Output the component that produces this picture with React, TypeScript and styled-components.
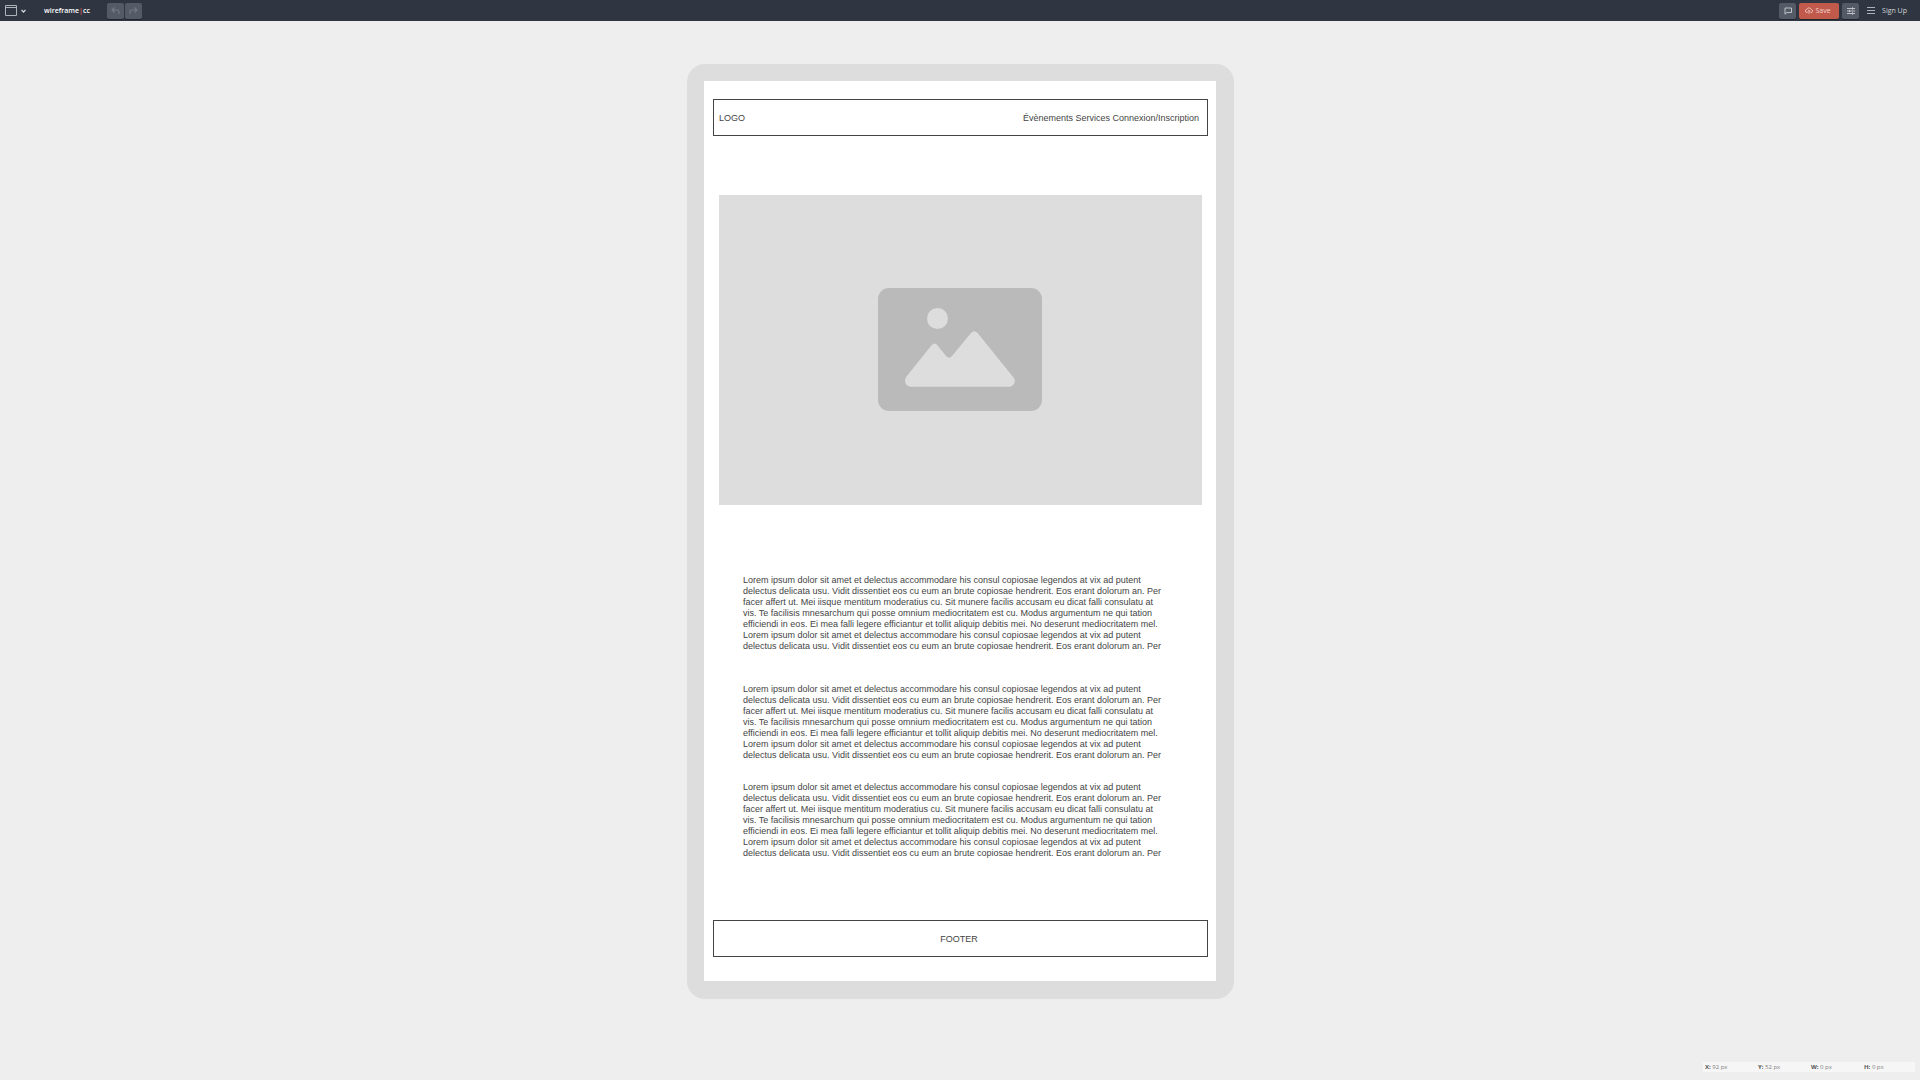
import React from "react";
import styled, { createGlobalStyle } from "styled-components";

const GlobalStyle = createGlobalStyle`
  * { box-sizing: border-box; }
  body {
    margin: 0;
    background: #eeeeee;
    color: #444444;
    font-family: "Liberation Sans", Arial, sans-serif;
    font-size: 9px;
    line-height: 11px;
  }
`;

const uiFont = `"Open Sans", "Noto Sans", sans-serif`;

const Page = styled.div`
  display: flex;
  flex-direction: column;
  min-height: 100vh;
`;

const TopBar = styled.header`
  display: flex;
  align-items: center;
  justify-content: space-between;
  height: 21px;
  padding: 0 13px 0 5px;
  background: #2f3541;
  color: #d3d5d9;
  font-family: ${uiFont};
`;

const Group = styled.div<{ $gap: number }>`
  display: flex;
  align-items: center;
  gap: ${(p) => p.$gap}px;
`;

const PlainButton = styled.button`
  display: flex;
  align-items: center;
  gap: 4px;
  padding: 0;
  border: 0;
  background: none;
  color: #aeb2b9;
`;

const Brand = styled.a`
  margin: 0 17px 0 18px;
  color: #ffffff;
  font-size: 7px;
  font-weight: 600;
  text-decoration: none;

  span { color: #e0604f; }
`;

const ToolButton = styled.button<{ $tone?: "save" | "dim" }>`
  display: flex;
  align-items: center;
  justify-content: center;
  gap: 3px;
  width: ${(p) => (p.$tone === "save" ? 40 : 17)}px;
  height: 16px;
  padding: ${(p) => (p.$tone === "save" ? "0 3px 0 0" : "0")};
  border: 0;
  border-radius: 2px;
  background: ${(p) => (p.$tone === "save" ? "#c25a4b" : "#555b66")};
  box-shadow: 0 1px 0 #20242d;
  color: ${(p) => (p.$tone === "dim" ? "#747a84" : p.$tone === "save" ? "#f0d4d0" : "#c9ccd1")};
  font-family: ${uiFont};
  font-size: 7px;
  line-height: 8px;
`;

const SignUp = styled.a`
  margin-left: 7px;
  color: #d3d5d9;
  font-size: 7px;
  text-decoration: none;
`;

const Canvas = styled.main`
  display: flex;
  flex: 1;
  justify-content: center;
  align-items: flex-start;
  padding: 43px 0 0 1px;
`;

const Device = styled.div`
  width: 100%;
  max-width: 547px;
  padding: 17px 18px 18px 17px;
  border-radius: 18px;
  background: #dddddd;
`;

const Screen = styled.article`
  display: flex;
  flex-direction: column;
  padding: 18px 8px 24px 9px;
  background: #ffffff;
`;

const Box = styled.div`
  display: flex;
  align-items: center;
  justify-content: space-between;
  height: 37px;
  padding: 1px 8px 0 5px;
  border: 1px solid #444444;
`;

const FooterBox = styled(Box)`
  justify-content: center;
  margin-top: 61px;
`;

const Picture = styled.div`
  display: flex;
  align-items: center;
  justify-content: center;
  height: 310px;
  margin: 59px 6px 0;
  padding: 0 1px 1px 0;
  background: #dddddd;
`;

const Paragraph = styled.p<{ $space: number }>`
  margin: ${(p) => p.$space}px 43px 0 30px;
`;

const StatusBar = styled.dl`
  position: fixed;
  right: 5px;
  bottom: 8px;
  display: grid;
  grid-template-columns: repeat(4, 53px);
  margin: 0;
  padding: 0;
  height: 10px;
  background: #f6f6f6;
  color: #808080;
  font-family: ${uiFont};
  font-size: 6px;
  line-height: 10px;

  div { display: flex; padding-left: 2px; }
  dt { color: #555555; font-weight: 700; }
  dd { margin: 0; }
`;

const lorem =
  "Lorem ipsum dolor sit amet et delectus accommodare his consul copiosae legendos at vix ad putent delectus delicata usu. Vidit dissentiet eos cu eum an brute copiosae hendrerit. Eos erant dolorum an. Per facer affert ut. Mei iisque mentitum moderatius cu. Sit munere facilis accusam eu dicat falli consulatu at vis. Te facilisis mnesarchum qui posse omnium mediocritatem est cu. Modus argumentum ne qui tation efficiendi in eos. Ei mea falli legere efficiantur et tollit aliquip debitis mei. No deserunt mediocritatem mel. Lorem ipsum dolor sit amet et delectus accommodare his consul copiosae legendos at vix ad putent delectus delicata usu. Vidit dissentiet eos cu eum an brute copiosae hendrerit. Eos erant dolorum an. Per";

const spaces = [70, 32, 21];

const status = [
  ["X:", "92 px"],
  ["Y:", "52 px"],
  ["W:", "0 px"],
  ["H:", "0 px"],
];

const WindowIcon = () => (
  <svg width="12" height="11" viewBox="0 0 12 11" fill="none" stroke="currentColor">
    <path d="M.5.5h11v10H.5zM.5 2.5h11" />
  </svg>
);

const ChevronIcon = () => (
  <svg width="5" height="4" viewBox="0 0 5 4" fill="none" stroke="#d3d5d9" strokeWidth="1.3">
    <path d="M.5 1l2 2 2-2" />
  </svg>
);

const UndoIcon = ({ flip = false }: { flip?: boolean }) => (
  <svg width="9" height="8" viewBox="0 0 9 8" fill="none" stroke="currentColor" strokeWidth="1.2">
    <g transform={flip ? "matrix(-1 0 0 1 9 0)" : undefined}>
      <path d="M3.5.5L1 3l2.500 2.500M1 3h5q2 0 2 2v2" />
    </g>
  </svg>
);

const CommentIcon = () => (
  <svg width="8" height="8" viewBox="0 0 8 8" fill="none" stroke="currentColor" strokeWidth=".9">
    <path d="M1 1h6.500v4.500H3L1 7.200z" />
  </svg>
);

const CloudIcon = () => (
  <svg width="8" height="7" viewBox="0 0 8 7" fill="none" stroke="currentColor" strokeWidth=".8">
    <path d="M2.500 5.500H2a1.500 1.500 0 0 1-.2-3 2.300 2.300 0 0 1 4.400 0 1.500 1.500 0 0 1-.2 3h-.5M4 6.800V3.300M2.800 4.500L4 3.300l1.200 1.200" />
  </svg>
);

const SlidersIcon = () => (
  <svg width="8" height="8" viewBox="0 0 8 8" stroke="currentColor" strokeWidth=".9">
    <path d="M0 1.500h8M0 4h8M0 6.500h8M5.500.3v2.400M2.500 2.800v2.400M5.500 5.300v2.400" />
  </svg>
);

const MenuIcon = () => (
  <svg width="8" height="8" viewBox="0 0 8 8" stroke="currentColor">
    <path d="M0 .5h8M0 3.500h8M0 6.500h8" />
  </svg>
);

const PictureIcon = () => (
  <svg width="164" height="123" viewBox="0 0 164 123" role="img" aria-label="Image">
    <rect width="164" height="123" rx="11" fill="#bababa" />
    <circle cx="59.500" cy="30.500" r="10.500" fill="#dddddd" />
    <path
      fill="#dddddd"
      d="M53.500 57.200Q56.500 54 59.500 57.200L68 68Q71 71.500 74 68L93 45Q96.300 41.500 99.600 45L135.500 89.500C138.500 93.500 136 98.700 131 98.700H33C28 98.700 25.200 93.500 28.500 88.500Z"
    />
  </svg>
);

export default function App() {
  return (
    <Page>
      <GlobalStyle />
      <TopBar>
        <Group $gap={0}>
          <PlainButton aria-label="Choose frame">
            <WindowIcon />
            <ChevronIcon />
          </PlainButton>
          <Brand href="#">
            wireframe<span>|</span>cc
          </Brand>
          <Group $gap={1}>
            <ToolButton $tone="dim" aria-label="Undo"><UndoIcon /></ToolButton>
            <ToolButton $tone="dim" aria-label="Redo"><UndoIcon flip /></ToolButton>
          </Group>
        </Group>
        <Group $gap={8}>
          <Group $gap={3}>
            <ToolButton aria-label="Comments"><CommentIcon /></ToolButton>
            <ToolButton $tone="save"><CloudIcon />Save</ToolButton>
            <ToolButton aria-label="Settings"><SlidersIcon /></ToolButton>
          </Group>
          <Group $gap={0}>
            <PlainButton aria-label="Menu"><MenuIcon /></PlainButton>
            <SignUp href="#">Sign Up</SignUp>
          </Group>
        </Group>
      </TopBar>
      <Canvas>
        <Device>
          <Screen>
            <Box>
              <span>LOGO</span>
              <span>Évènements Services Connexion/Inscription</span>
            </Box>
            <Picture><PictureIcon /></Picture>
            {spaces.map((space) => (
              <Paragraph key={space} $space={space}>{lorem}</Paragraph>
            ))}
            <FooterBox as="footer">FOOTER</FooterBox>
          </Screen>
        </Device>
      </Canvas>
      <StatusBar>
        {status.map(([name, value]) => (
          <div key={name}>
            <dt>{name}&nbsp;</dt>
            <dd>{value}</dd>
          </div>
        ))}
      </StatusBar>
    </Page>
  );
}
